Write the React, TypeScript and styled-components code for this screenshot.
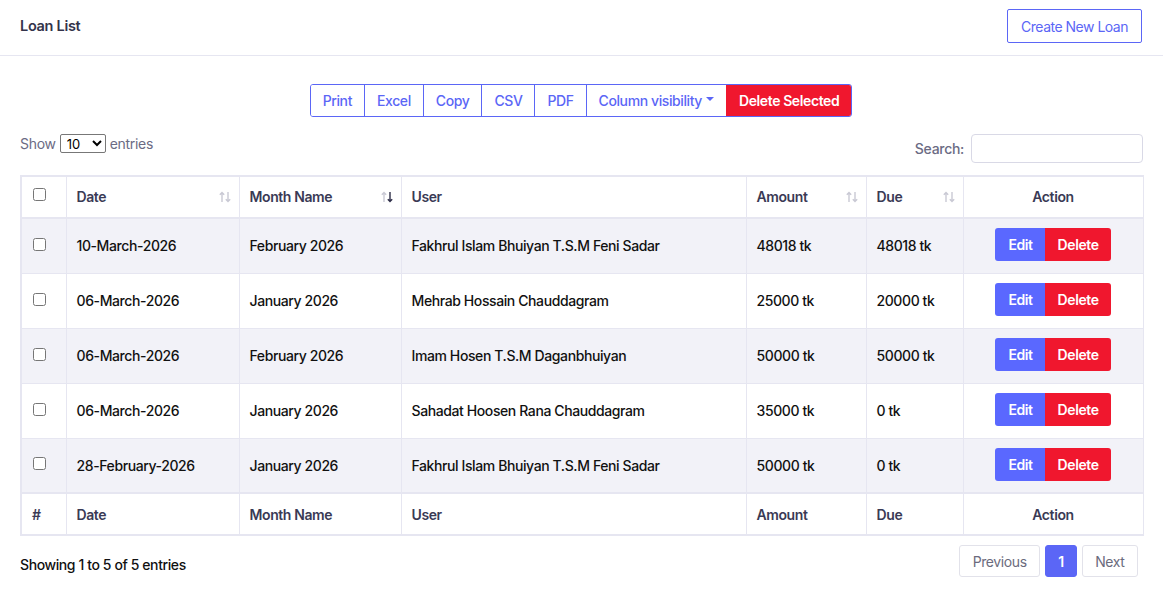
import React from 'react';
import styled, { createGlobalStyle } from 'styled-components';

const GlobalStyle = createGlobalStyle`
  body {
    margin: 0;
    background: #fff;
    font-family: Inter, "Noto Sans", sans-serif;
    font-size: 14px;
    color: #111;
  }
`;

const Card = styled.div`
  width: 1163px;
  background: #fff;
`;

const CardHeader = styled.div`
  height: 56px;
  box-sizing: border-box;
  padding: 0 20px 3px;
  display: flex;
  align-items: center;
  justify-content: space-between;
  border-bottom: 1px solid #e6e6f1;
`;

const Title = styled.div`
  font-size: 14.5px;
  font-weight: 600;
  color: #33334a;
  letter-spacing: -0.3px;
  margin-top: -2px;
`;

const OutlineButton = styled.button`
  height: 34px;
  padding: 0 13px;
  margin-right: 1px;
  border: 1px solid #5b66f6;
  background: #fff;
  color: #5b66f6;
  font-family: inherit;
  font-size: 14px;
  border-radius: 2px;
  letter-spacing: -0.5px;
`;

const Body = styled.div`
  padding: 28px 20px 0 20px;
`;

const ToolbarRow = styled.div`
  display: flex;
  justify-content: center;
  padding-right: 1px;
`;

const ButtonGroup = styled.div`
  display: flex;
  border: 1px solid #5b66f6;
  border-radius: 3px;
  overflow: hidden;
  height: 33px;
  box-sizing: border-box;
`;

const GroupButton = styled.button<{ $danger?: boolean }>`
  border: none;
  border-left: 1px solid ${p => (p.$danger ? '#f0172e' : '#5b66f6')};
  &:first-child { border-left: none; }
  background: ${p => (p.$danger ? '#f0172e' : '#fff')};
  color: ${p => (p.$danger ? '#fff' : '#5b66f6')};
  font-family: inherit;
  font-size: 14px;
  font-weight: ${p => (p.$danger ? 600 : 500)};
  padding: 0 12px;
  display: flex;
  align-items: center;
  gap: 4px;
  letter-spacing: -0.4px;
`;

const Caret = styled.span`
  width: 0;
  height: 0;
  border-left: 4px solid transparent;
  border-right: 4px solid transparent;
  border-top: 4px solid #5b66f6;
  margin-top: -3px;
`;

const ControlsRow = styled.div`
  display: flex;
  justify-content: space-between;
  align-items: flex-start;
  margin-top: 16px;
  height: 42px;
`;

const Label = styled.label`
  color: #6b6b84;
  font-size: 14px;
  display: flex;
  align-items: center;
  gap: 4px;
  letter-spacing: -0.3px;
`;

const LengthLabel = styled(Label)`
  margin-top: 1px;
`;

const SearchLabel = styled(Label)`
  margin-top: 1px;
  font-weight: 500;
`;

const Select = styled.select`
  height: 19px;
  width: 46px;
  font-family: Inter, sans-serif;
  font-size: 13px;
  color: #000;
  border: 1px solid #777;
  border-radius: 2px;
  padding: 0 2px;
  background: #fff;
`;

const SearchInput = styled.input`
  width: 172px;
  height: 29px;
  box-sizing: border-box;
  border: 1px solid #d9d9e6;
  border-radius: 4px;
  margin-left: 3px;
`;

const Table = styled.table`
  width: 1122px;
  border-collapse: collapse;
  table-layout: fixed;
  border: 2px solid #e6e6f1;
  border-right-width: 1px;
`;

const Th = styled.th<{ $center?: boolean; $w: number }>`
  width: ${p => p.$w}px;
  height: 42px;
  box-sizing: border-box;
  border: 1px solid #e6e6f1;
  border-bottom-width: 2px;
  padding: 0 10px;
  padding-bottom: 2px;
  text-align: ${p => (p.$center ? 'center' : 'left')};
  color: #3a3a55;
  font-weight: 600;
  font-size: 14px;
  position: relative;
  letter-spacing: -0.4px;
`;

const FootTh = styled(Th)`
  border-bottom-width: 1px;
  border-top-width: 2px;
  padding-bottom: 0;
`;

const Tr = styled.tr<{ $striped?: boolean }>`
  background: ${p => (p.$striped ? '#f2f2f8' : '#fff')};
`;

const Td = styled.td<{ $center?: boolean }>`
  height: 55px;
  box-sizing: border-box;
  border: 1px solid #e6e6f1;
  padding: 0 10px;
  text-align: ${p => (p.$center ? 'center' : 'left')};
  color: #111;
  font-weight: 500;
  font-size: 14px;
  letter-spacing: -0.4px;
`;

const Check = styled.input`
  margin: 0;
  width: 13px;
  height: 13px;
  vertical-align: middle;
  position: relative;
  top: -3px;
  left: 1px;
`;

const SortIcon = styled.span`
  position: absolute;
  right: 7px;
  top: 50%;
  transform: translateY(-50%);
  display: flex;
  line-height: 0;
`;

const ActionGroup = styled.div`
  display: inline-flex;
  border-radius: 3px;
  overflow: hidden;
  margin-top: -2px;
`;

const ActionButton = styled.button<{ $color: string }>`
  height: 33px;
  border: none;
  background: ${p => p.$color};
  color: #fff;
  font-family: inherit;
  font-size: 14px;
  font-weight: 600;
  padding: 0 12px 0 13px;
  letter-spacing: -0.4px;
`;

const Footer = styled.div`
  display: flex;
  justify-content: space-between;
  align-items: center;
  margin-top: 9px;
  padding-right: 5px;
`;

const Info = styled.div`
  color: #111;
  font-size: 14px;
  font-weight: 500;
  margin-top: 6px;
  letter-spacing: -0.4px;
`;

const Pagination = styled.div`
  display: flex;
  gap: 5px;
`;

const PageButton = styled.button<{ $active?: boolean }>`
  height: 32px;
  box-sizing: border-box;
  padding: 0 ${p => (p.$active ? 12 : 12.5)}px;
  border: 1px solid ${p => (p.$active ? '#5b66f6' : '#e2e2ea')};
  background: ${p => (p.$active ? '#5b66f6' : '#fff')};
  color: ${p => (p.$active ? '#fff' : '#6b6b7d')};
  border-radius: 3px;
  font-family: inherit;
  font-size: 14px;
  font-weight: ${p => (p.$active ? 600 : 400)};
  letter-spacing: -0.4px;
`;

const Sort = ({ active }: { active?: boolean }) => (
  <SortIcon>
    <svg width="14" height="14" viewBox="0 0 14 14" fill="none" strokeWidth="1.4">
      <path d="M4 12V2.5M1.8 4.7L4 2.5l2.2 2.2" stroke="#c9c9d4" />
      <path d="M10 2v9.5M7.8 9.3L10 11.5l2.2-2.2" stroke={active ? '#2e2e48' : '#c9c9d4'} />
    </svg>
  </SortIcon>
);

const rows = [
  ['10-March-2026', 'February 2026', 'Fakhrul Islam Bhuiyan T.S.M Feni Sadar', '48018 tk', '48018 tk'],
  ['06-March-2026', 'January 2026', 'Mehrab Hossain Chauddagram', '25000 tk', '20000 tk'],
  ['06-March-2026', 'February 2026', 'Imam Hosen T.S.M Daganbhuiyan', '50000 tk', '50000 tk'],
  ['06-March-2026', 'January 2026', 'Sahadat Hoosen Rana Chauddagram', '35000 tk', '0 tk'],
  ['28-February-2026', 'January 2026', 'Fakhrul Islam Bhuiyan T.S.M Feni Sadar', '50000 tk', '0 tk'],
];

const widths = [45, 173, 162, 345, 120, 97, 180];

export default function App() {
  return (
    <Card>
      <GlobalStyle />
      <CardHeader>
        <Title>Loan List</Title>
        <OutlineButton>Create New Loan</OutlineButton>
      </CardHeader>
      <Body>
        <ToolbarRow>
          <ButtonGroup>
            <GroupButton>Print</GroupButton>
            <GroupButton>Excel</GroupButton>
            <GroupButton>Copy</GroupButton>
            <GroupButton>CSV</GroupButton>
            <GroupButton>PDF</GroupButton>
            <GroupButton>Column visibility <Caret /></GroupButton>
            <GroupButton $danger>Delete Selected</GroupButton>
          </ButtonGroup>
        </ToolbarRow>
        <ControlsRow>
          <LengthLabel>
            Show
            <Select defaultValue="10">
              <option>10</option>
              <option>25</option>
              <option>50</option>
              <option>100</option>
            </Select>
            entries
          </LengthLabel>
          <SearchLabel>
            Search:
            <SearchInput />
          </SearchLabel>
        </ControlsRow>
        <Table>
          <thead>
            <tr>
              <Th $w={widths[0]}><Check type="checkbox" /></Th>
              <Th $w={widths[1]}>Date<Sort /></Th>
              <Th $w={widths[2]}>Month Name<Sort active /></Th>
              <Th $w={widths[3]}>User</Th>
              <Th $w={widths[4]}>Amount<Sort /></Th>
              <Th $w={widths[5]}>Due<Sort /></Th>
              <Th $w={widths[6]} $center>Action</Th>
            </tr>
          </thead>
          <tbody>
            {rows.map((r, i) => (
              <Tr key={i} $striped={i % 2 === 0}>
                <Td><Check type="checkbox" /></Td>
                {r.map((c, j) => (
                  <Td key={j}>{c}</Td>
                ))}
                <Td $center>
                  <ActionGroup>
                    <ActionButton $color="#5a68ff">Edit</ActionButton>
                    <ActionButton $color="#f0172e">Delete</ActionButton>
                  </ActionGroup>
                </Td>
              </Tr>
            ))}
          </tbody>
          <tfoot>
            <tr>
              <FootTh $w={widths[0]}>#</FootTh>
              <FootTh $w={widths[1]}>Date</FootTh>
              <FootTh $w={widths[2]}>Month Name</FootTh>
              <FootTh $w={widths[3]}>User</FootTh>
              <FootTh $w={widths[4]}>Amount</FootTh>
              <FootTh $w={widths[5]}>Due</FootTh>
              <FootTh $w={widths[6]} $center>Action</FootTh>
            </tr>
          </tfoot>
        </Table>
        <Footer>
          <Info>Showing 1 to 5 of 5 entries</Info>
          <Pagination>
            <PageButton>Previous</PageButton>
            <PageButton $active>1</PageButton>
            <PageButton>Next</PageButton>
          </Pagination>
        </Footer>
      </Body>
    </Card>
  );
}
